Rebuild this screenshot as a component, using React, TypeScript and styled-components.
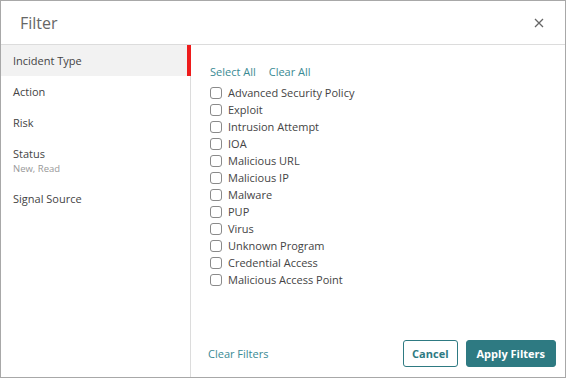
import React from "react";
import styled, { createGlobalStyle } from "styled-components";

const Global = createGlobalStyle`
  html, body { margin: 0; padding: 0; background: #fff; }
  body { font-family: "Open Sans", "Noto Sans", sans-serif; color: #444; }
  * { box-sizing: border-box; }
`;

const Dialog = styled.div`
  width: 566px;
  height: 378px;
  border: 1px solid #a8a8a8;
  display: flex;
  flex-direction: column;
  background: #fff;
`;

const Header = styled.div`
  height: 44px;
  flex: none;
  display: flex;
  align-items: center;
  justify-content: space-between;
  padding: 0 19px 0 19px;
  border-bottom: 1px solid #dcdcdc;
`;

const Title = styled.div`
  font-size: 16px;
  color: #666;
`;

const Close = styled.button`
  border: 0;
  background: none;
  padding: 0;
  width: 14px;
  height: 14px;
  display: flex;
  align-items: center;
  justify-content: center;
  cursor: pointer;
`;

const Body = styled.div`
  flex: 1;
  display: flex;
  min-height: 0;
`;

const Sidebar = styled.div`
  width: 190px;
  flex: none;
  border-right: 1px solid #dcdcdc;
  display: flex;
  flex-direction: column;
`;

const NavItem = styled.div<{ $active?: boolean }>`
  padding: 7px 0 7px 12px;
  min-height: 31px;
  margin-right: -1px;
  background: ${(p) => (p.$active ? "#f2f2f2" : "transparent")};
  border-right: 4px solid ${(p) => (p.$active ? "#ee1c1c" : "transparent")};
  display: flex;
  flex-direction: column;
  justify-content: center;
`;

const NavLabel = styled.div`
  font-size: 11px;
  line-height: 17px;
  color: #444;
`;

const NavSub = styled.div`
  font-size: 9.5px;
  line-height: 14px;
  color: #999;
`;

const Panel = styled.div`
  flex: 1;
  display: flex;
  flex-direction: column;
  padding: 18px 9px 10px 19px;
`;

const LinkRow = styled.div`
  display: flex;
  gap: 13px;
  margin-bottom: 4px;
`;

const Link = styled.a`
  font-size: 11px;
  line-height: 17px;
  color: #3a8a94;
  cursor: pointer;
`;

const List = styled.div`
  display: flex;
  flex-direction: column;
`;

const Row = styled.label`
  display: flex;
  align-items: center;
  height: 17px;
  font-size: 11px;
  color: #444;
`;

const Box = styled.span`
  width: 12px;
  height: 12px;
  border: 1px solid #8a8a8a;
  border-radius: 3px;
  margin-right: 6px;
  flex: none;
`;

const Footer = styled.div`
  margin-top: auto;
  display: flex;
  align-items: center;
  margin-left: -2px;
`;

const FooterLink = styled(Link)`
  margin-right: auto;
`;

const Button = styled.button<{ $primary?: boolean }>`
  height: 27px;
  padding: 0 ${(p) => (p.$primary ? "10px" : "8px")};
  border-radius: 3px;
  border: 1px solid #2e7a82;
  background: ${(p) => (p.$primary ? "#2e7a82" : "#fff")};
  color: ${(p) => (p.$primary ? "#fff" : "#2e7a82")};
  font-family: "Open Sans", sans-serif;
  font-weight: 700;
  font-size: 11px;
  margin-left: 8px;
  cursor: pointer;
`;

const types = [
  "Advanced Security Policy",
  "Exploit",
  "Intrusion Attempt",
  "IOA",
  "Malicious URL",
  "Malicious IP",
  "Malware",
  "PUP",
  "Virus",
  "Unknown Program",
  "Credential Access",
  "Malicious Access Point",
];

export default function App() {
  return (
    <>
      <Global />
      <Dialog>
        <Header>
          <Title>Filter</Title>
          <Close aria-label="Close">
            <svg width="10" height="10" viewBox="0 0 10 10">
              <path d="M1 1L9 9M9 1L1 9" stroke="#666" strokeWidth="1.3" />
            </svg>
          </Close>
        </Header>
        <Body>
          <Sidebar>
            <NavItem $active>
              <NavLabel>Incident Type</NavLabel>
            </NavItem>
            <NavItem>
              <NavLabel>Action</NavLabel>
            </NavItem>
            <NavItem>
              <NavLabel>Risk</NavLabel>
            </NavItem>
            <NavItem>
              <NavLabel>Status</NavLabel>
              <NavSub>New, Read</NavSub>
            </NavItem>
            <NavItem>
              <NavLabel>Signal Source</NavLabel>
            </NavItem>
          </Sidebar>
          <Panel>
            <LinkRow>
              <Link>Select All</Link>
              <Link>Clear All</Link>
            </LinkRow>
            <List>
              {types.map((t) => (
                <Row key={t}>
                  <Box />
                  {t}
                </Row>
              ))}
            </List>
            <Footer>
              <FooterLink>Clear Filters</FooterLink>
              <Button>Cancel</Button>
              <Button $primary>Apply Filters</Button>
            </Footer>
          </Panel>
        </Body>
      </Dialog>
    </>
  );
}
